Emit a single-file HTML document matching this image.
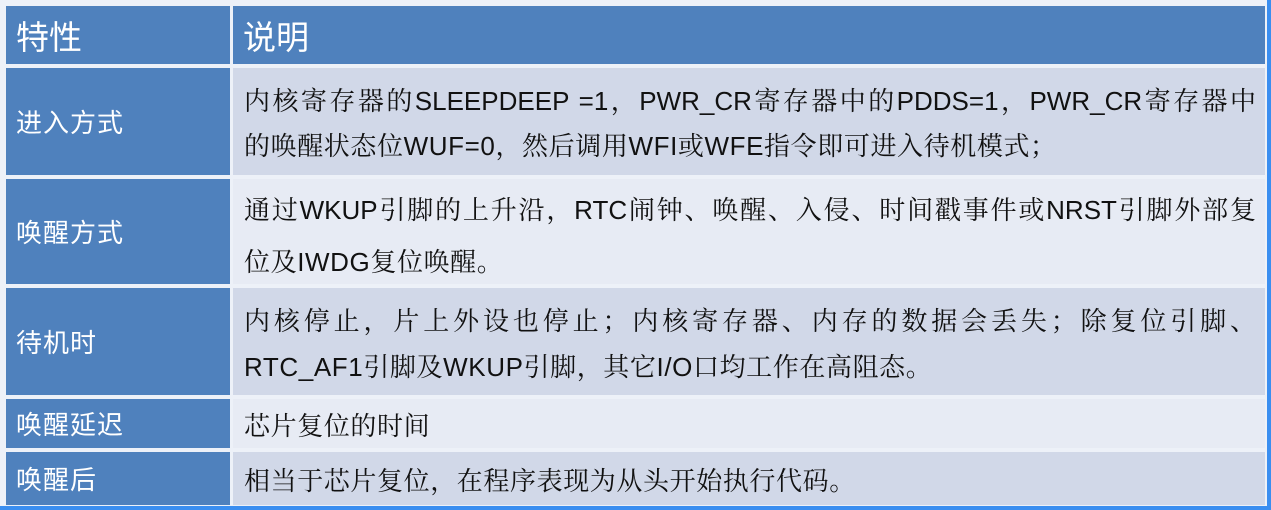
<!DOCTYPE html>
<html><head><meta charset="utf-8"><style>
html,body{margin:0;padding:0}
body{width:1271px;height:510px;position:relative;overflow:hidden;background:#f4f6fb;}
.frame{position:absolute;left:0;top:0;width:1267px;height:506px;border-right:4px solid #3a8ef0;border-bottom:4px solid #3a8ef0;background:#edf1f8}
.c{position:absolute;box-sizing:border-box}
.l{left:6px;width:224px;background:#4f81bd;color:#fff;font-family:"Liberation Sans","Noto Sans CJK SC",sans-serif;font-size:26px;padding-left:10px;display:flex;align-items:center;letter-spacing:1px}
.r{left:233px;width:1032px;color:#111;font-family:"Liberation Sans","Noto Serif CJK SC","Noto Sans CJK SC",serif;font-size:26px;padding-left:11px;padding-right:9px}
.odd{background:#d1d8e8}.even{background:#e7ebf4}
.ln{position:absolute;left:11px;right:9px;height:32px;line-height:32px;white-space:nowrap;letter-spacing:0.6px}
.j{text-align:justify;text-align-last:justify;letter-spacing:0}
.h{background:#4f81bd;color:#fff;font-family:"Liberation Sans","Noto Sans CJK SC",sans-serif;font-size:33px;display:flex;align-items:center}
</style></head><body>
<div class="frame"></div>
<div class="c h" style="left:6px;width:224px;top:6px;height:58px;padding-left:10px">特性</div>
<div class="c h" style="left:233px;width:1032px;top:6px;height:58px;padding-left:10px">说明</div>

<div class="c l" style="top:68px;height:107px">进入方式</div>
<div class="c r odd" style="top:68px;height:107px">
<div class="ln j" style="top:17px">内核寄存器的SLEEPDEEP =1，PWR_CR寄存器中的PDDS=1，PWR_CR寄存器中</div>
<div class="ln" style="top:62px">的唤醒状态位WUF=0，然后调用WFI或WFE指令即可进入待机模式；</div>
</div>

<div class="c l" style="top:179px;height:105px">唤醒方式</div>
<div class="c r even" style="top:179px;height:105px">
<div class="ln j" style="top:15px">通过WKUP引脚的上升沿，RTC闹钟、唤醒、入侵、时间戳事件或NRST引脚外部复</div>
<div class="ln" style="top:67px">位及IWDG复位唤醒。</div>
</div>

<div class="c l" style="top:288px;height:107px">待机时</div>
<div class="c r odd" style="top:288px;height:107px">
<div class="ln j" style="top:17px">内核停止，片上外设也停止；内核寄存器、内存的数据会丢失；除复位引脚、</div>
<div class="ln" style="top:63px">RTC_AF1引脚及WKUP引脚，其它I/O口均工作在高阻态。</div>
</div>

<div class="c l" style="top:399px;height:49px">唤醒延迟</div>
<div class="c r even" style="top:399px;height:49px">
<div class="ln" style="top:11px">芯片复位的时间</div>
</div>

<div class="c l" style="top:452px;height:53px">唤醒后</div>
<div class="c r odd" style="top:452px;height:53px">
<div class="ln" style="top:13px">相当于芯片复位，在程序表现为从头开始执行代码。</div>
</div>
</body></html>
